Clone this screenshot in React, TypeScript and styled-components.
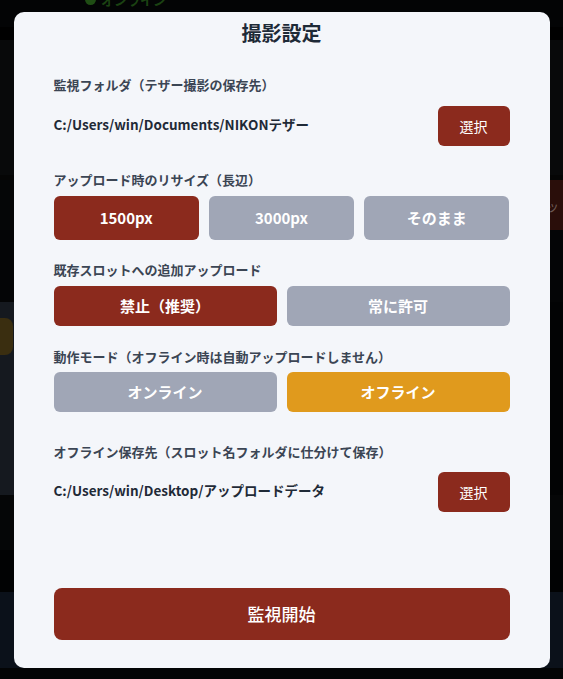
import React, { useState } from "react";
import styled, { createGlobalStyle } from "styled-components";

const Global = createGlobalStyle`
  html, body { margin: 0; padding: 0; background: #040506; }
  body { font-family: "Noto Sans CJK JP", "Noto Sans", sans-serif; overflow: hidden; }
  * { box-sizing: border-box; }
`;

/* ---------- dimmed app underneath ---------- */
const Backdrop = styled.div`
  height: 679px;
  display: flex;
  flex-direction: column;
  overflow: hidden;
`;

const Band = styled.div<{ $h: number; $bg: string }>`
  height: ${(p) => p.$h}px;
  background: ${(p) => p.$bg};
  display: flex;
  align-items: center;
  flex-shrink: 0;
`;

const TopStatus = styled.div`
  display: flex;
  align-items: center;
  gap: 5px;
  margin: -28px 0 0 85px;
  color: #1b4212;
  font-size: 13px;
  line-height: 18px;
  font-weight: 700;
`;

const StatusDot = styled.span`
  width: 11px;
  height: 11px;
  border-radius: 50%;
  background: #1f4d14;
`;

const GhostButton = styled.div`
  margin-left: auto;
  height: 100%;
  width: 80px;
  background: #2a0e0a;
  color: #6d5a55;
  font-size: 13px;
  display: flex;
  align-items: center;
  justify-content: flex-end;
  padding-right: 4px;
`;

const SlatePanel = styled.div`
  width: 420px;
  height: 100%;
  background: #15191f;
  padding-top: 16px;
`;

const YellowChip = styled.div`
  width: 13px;
  height: 37px;
  background: #3a2e10;
  border-radius: 0 8px 8px 0;
`;

/* ---------- modal ---------- */
const Overlay = styled.div`
  position: fixed;
  inset: 0;
  display: flex;
  align-items: center;
  justify-content: center;
`;

const Modal = styled.div`
  width: 536px;
  height: 656px;
  background: #f4f6fa;
  border-radius: 10px;
  padding: 7px 40px 28px;
  display: flex;
  flex-direction: column;
`;

const Title = styled.h2`
  margin: 0;
  text-align: center;
  font-size: 20px;
  line-height: 28px;
  font-weight: 700;
  color: #1e2a37;
`;

const Field = styled.section<{ $top: number; $gap: number }>`
  margin-top: ${(p) => p.$top}px;
  display: flex;
  flex-direction: column;
  gap: ${(p) => p.$gap}px;
`;

const Label = styled.div`
  font-size: 13px;
  line-height: 18px;
  font-weight: 700;
  color: #3b4554;
`;

const PathRow = styled.div`
  display: flex;
  align-items: center;
  justify-content: space-between;
  height: 40px;
`;

const PathText = styled.span`
  font-size: 13.5px;
  font-weight: 700;
  color: #1f2a37;
  margin-top: -3px;
`;

const SelectButton = styled.button`
  width: 72px;
  height: 40px;
  border: none;
  border-radius: 6px;
  background: #8b2a1d;
  color: #ffffff;
  font-family: inherit;
  font-size: 14px;
  font-weight: 400;
  cursor: pointer;
`;

const ChoiceRow = styled.div<{ $cols: number }>`
  display: grid;
  grid-template-columns: repeat(${(p) => p.$cols}, 1fr);
  gap: 10px;
`;

type Tone = "red" | "gray" | "orange";
const toneBg: Record<Tone, string> = {
  red: "#8b2a1d",
  gray: "#a0a6b6",
  orange: "#e09a1d",
};

const Choice = styled.button<{ $tone: Tone; $h: number }>`
  height: ${(p) => p.$h}px;
  border: none;
  border-radius: 6px;
  background: ${(p) => toneBg[p.$tone]};
  color: #ffffff;
  font-family: inherit;
  font-size: 15px;
  font-weight: 700;
  cursor: pointer;
`;

const Spacer = styled.div`
  flex: 1;
`;

const StartButton = styled.button`
  height: 52px;
  border: none;
  border-radius: 8px;
  background: #8b2a1d;
  color: #ffffff;
  font-family: inherit;
  font-size: 17px;
  font-weight: 500;
  cursor: pointer;
`;

export default function App() {
  const [size, setSize] = useState("1500px");
  const [allow, setAllow] = useState("禁止（推奨）");
  const [mode, setMode] = useState("オフライン");

  return (
    <>
      <Global />
      <Backdrop>
        <Band $h={27} $bg="#030405">
          <TopStatus>
            <StatusDot />
            オンライン
          </TopStatus>
        </Band>
        <Band $h={13} $bg="#000000" />
        <Band $h={135} $bg="#08090a" />
        <Band $h={5} $bg="#050505" />
        <Band $h={50} $bg="#050607">
          <GhostButton>ッ</GhostButton>
        </Band>
        <Band $h={72} $bg="#040506" />
        <Band $h={193} $bg="#020304">
          <SlatePanel>
            <YellowChip />
          </SlatePanel>
        </Band>
        <Band $h={55} $bg="#050607" />
        <Band $h={42} $bg="#010203" />
        <Band $h={76} $bg="#0b111a" />
        <Band $h={11} $bg="#030405" />
      </Backdrop>

      <Overlay>
        <Modal>
          <Title>撮影設定</Title>

          <Field $top={29} $gap={12}>
            <Label>監視フォルダ（テザー撮影の保存先）</Label>
            <PathRow>
              <PathText>C:/Users/win/Documents/NIKONテザー</PathText>
              <SelectButton>選択</SelectButton>
            </PathRow>
          </Field>

          <Field $top={25} $gap={7}>
            <Label>アップロード時のリサイズ（長辺）</Label>
            <ChoiceRow $cols={3}>
              {["1500px", "3000px", "そのまま"].map((v) => (
                <Choice key={v} $h={44} $tone={v === size ? "red" : "gray"} onClick={() => setSize(v)}>
                  {v}
                </Choice>
              ))}
            </ChoiceRow>
          </Field>

          <Field $top={21} $gap={7}>
            <Label>既存スロットへの追加アップロード</Label>
            <ChoiceRow $cols={2}>
              {["禁止（推奨）", "常に許可"].map((v) => (
                <Choice key={v} $h={40} $tone={v === allow ? "red" : "gray"} onClick={() => setAllow(v)}>
                  {v}
                </Choice>
              ))}
            </ChoiceRow>
          </Field>

          <Field $top={22} $gap={6}>
            <Label>動作モード（オフライン時は自動アップロードしません）</Label>
            <ChoiceRow $cols={2}>
              {["オンライン", "オフライン"].map((v) => (
                <Choice
                  key={v}
                  $h={40}
                  $tone={v === mode ? (v === "オフライン" ? "orange" : "red") : "gray"}
                  onClick={() => setMode(v)}
                >
                  {v}
                </Choice>
              ))}
            </ChoiceRow>
          </Field>

          <Field $top={31} $gap={11}>
            <Label>オフライン保存先（スロット名フォルダに仕分けて保存）</Label>
            <PathRow>
              <PathText>C:/Users/win/Desktop/アップロードデータ</PathText>
              <SelectButton>選択</SelectButton>
            </PathRow>
          </Field>

          <Spacer />
          <StartButton>監視開始</StartButton>
        </Modal>
      </Overlay>
    </>
  );
}
